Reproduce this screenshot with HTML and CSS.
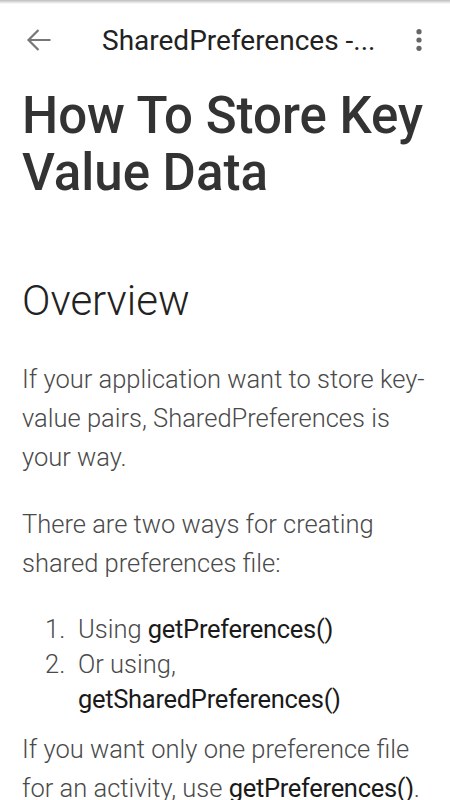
FILE: index.html
```html
<!DOCTYPE html>
<html>
<head>
<meta charset="utf-8">
<link rel="stylesheet" href="styles.css">
</head>
<body>
<div class="topshadow"></div>
<header class="bar">
  <div class="back">
    <svg width="26" height="24" viewBox="0 0 26 24"><path d="M24.5 12H2.5M12.5 2L2.5 12L12.5 22" fill="none" stroke="#777" stroke-width="2.2"/></svg>
  </div>
  <div class="title">SharedPreferences -...</div>
  <div class="more">
    <svg width="8" height="26" viewBox="0 0 8 26"><circle cx="4" cy="4.7" r="2.6" fill="#666"/><circle cx="4" cy="13" r="2.6" fill="#666"/><circle cx="4" cy="21.3" r="2.6" fill="#666"/></svg>
  </div>
</header>
<main class="content">
  <h1 class="h1">How To Store Key Value Data</h1>
  <h2 class="h2">Overview</h2>
  <p class="para">If your application want to store key-value pairs, SharedPreferences is your way.</p>
  <p class="para">There are two ways for creating shared preferences file:</p>
  <ol class="list">
    <li class="item"><span class="num">1.</span><span>Using <code class="code">getPreferences()</code></span></li>
    <li class="item"><span class="num">2.</span><span>Or using, <code class="code">getSharedPreferences()</code></span></li>
  </ol>
  <p class="para">If you want only one preference file for an activity, use <code class="code">getPreferences()</code>.</p>
</main>
</body>
</html>
```
FILE: styles.css
```css
html, body {
  margin: 0;
  padding: 0;
  background: #fff;
  overflow: hidden;
}
body {
  font-family: Roboto, "Noto Sans", sans-serif;
  width: 450px;
  height: 800px;
  position: relative;
}
.topshadow {
  position: absolute;
  top: 0;
  left: 0;
  right: 0;
  height: 4px;
  background: linear-gradient(#bdbdbd, rgba(255,255,255,0));
}
.bar {
  height: 80px;
  display: flex;
  align-items: center;
}
.back {
  width: 102px;
  padding-left: 26px;
  box-sizing: border-box;
  display: flex;
  align-items: center;
}
.title {
  flex: 1;
  font-size: 28px;
  color: #222;
  white-space: nowrap;
  overflow: hidden;
}
.more {
  width: 50px;
  display: flex;
  justify-content: flex-end;
  padding-right: 27px;
  box-sizing: border-box;
}
.content {
  padding: 0 22px;
}
.h1 {
  font-size: 51px;
  font-weight: 500;
  line-height: 57px;
  color: #333;
  margin: 7px 0 0;
}
.h2 {
  font-size: 42px;
  font-weight: 300;
  color: #222;
  line-height: 48px;
  margin: 76px 0 0;
}
.para {
  font-size: 25.5px;
  font-weight: 300;
  color: #4a4a4a;
  line-height: 39px;
  margin: 28px 0 0;
}
.h2 + .para {
  margin-top: 35px;
}
.list {
  list-style: none;
  margin: 29px 0 0;
  padding-left: 23px;
  font-size: 25.5px;
  font-weight: 300;
  color: #4a4a4a;
  line-height: 35px;
}
.item {
  display: grid;
  grid-template-columns: 33px 1fr;
}
.code {
  font-family: Roboto, sans-serif;
  font-weight: 400;
  color: #1a1a1a;
  letter-spacing: -0.3px;
}
.list + .para {
  margin-top: 13px;
}
```
